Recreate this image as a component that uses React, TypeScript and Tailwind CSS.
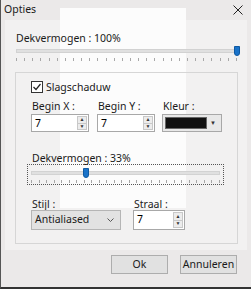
import React from 'react';

const font = { fontFamily: '"Noto Sans", "Open Sans", Arial, sans-serif' };

function Ticks({ count, className }: { count: number; className?: string }) {
  return (
    <div className={`flex justify-between ${className ?? ''}`}>
      {Array.from({ length: count }).map((_, i) => (
        <div key={i} className="w-px h-[3px] bg-[#a8a8a8]" />
      ))}
    </div>
  );
}

function Slider({ pos, ticks }: { pos: number; ticks: number }) {
  return (
    <div className="relative h-[16px]">
      <div className="absolute left-0 right-0 top-[3px] h-[4px] bg-[#e0e0e0] border border-[#d2d2d2]" />
      <div
        className="absolute top-0 w-[6px] h-[10px] bg-[#1a73c9] rounded-b-[3px] border border-[#0f5aa3]"
        style={{ left: pos }}
      />
      <Ticks count={ticks} className="absolute left-0 right-0 top-[12px]" />
    </div>
  );
}

function Spin({ value, width }: { value: string; width: string }) {
  return (
    <div className={`${width} flex border border-[#a8a8a8] bg-white`}>
      <span className="flex-1 pl-[3px] text-[10.5px] leading-[16px] text-black">{value}</span>
      <div className="w-[10px] my-[1px] mr-[1px] flex flex-col border border-[#c8c8c8] bg-[#ececec]">
        <div className="flex-1 flex items-center justify-center text-[5px] leading-none text-[#333]">▲</div>
        <div className="flex-1 flex items-center justify-center text-[5px] leading-none text-[#333] border-t border-[#c8c8c8]">▼</div>
      </div>
    </div>
  );
}

export default function App() {
  return (
    <div style={font} className="relative w-[251px] h-[289px] overflow-hidden bg-[#ebe9e9] text-[#1a1a1a] border-l border-[#555] border-b-2 border-b-[#333]">
      {/* Screenshot overlay artefacts, behind the controls */}
      <div className="absolute left-[4px] top-[20px] w-[242px] h-[230px] bg-[#f2f1f1]" />
      <div className="absolute left-[59px] top-[8px] w-[126px] h-[200px] bg-[#fcfcfc]" />

      <div className="relative">
        {/* Title bar */}
        <div className="h-[20px] flex items-center justify-between pl-[3px] pr-[8px]">
          <span className="text-[10.5px]">Opties</span>
          <svg width="10" height="10" viewBox="0 0 10 10" stroke="#222" strokeWidth="1">
            <path d="M0.5 0.5 L9.5 9.5 M9.5 0.5 L0.5 9.5" />
          </svg>
        </div>

        <div className="pl-[14px] pr-[13px]">
          <div className="mt-[10px] text-[10.5px] leading-[16px] pl-px">Dekvermogen : 100%</div>
          <div className="pl-px pr-[1px]">
            <Slider pos={218} ticks={28} />
          </div>

          {/* Group box */}
          <div className="mt-[10px] h-[172px] border border-[#d6d6d6] pl-[15px] pt-[6px]">
            <div className="flex items-center gap-[3px]">
              <div className="w-[12px] h-[12px] border border-[#333] bg-white flex items-center justify-center">
                <svg width="10" height="10" viewBox="0 0 10 10" fill="none" stroke="#222" strokeWidth="1.2">
                  <path d="M1.5 5 L4 7.5 L8.5 2" />
                </svg>
              </div>
              <span className="text-[10.5px] leading-[16px]">Slagschaduw</span>
            </div>

            <div className="mt-[3px] flex gap-[8px]">
              <div className="flex flex-col">
                <span className="text-[10.5px] leading-[16px] pl-px">Begin X :</span>
                <Spin value="7" width="w-[58px] h-[18px]" />
              </div>
              <div className="flex flex-col">
                <span className="text-[10.5px] leading-[16px] pl-px">Begin Y :</span>
                <Spin value="7" width="w-[58px] h-[18px]" />
              </div>
              <div className="flex flex-col ml-[-1px]">
                <span className="text-[10.5px] leading-[16px] pl-px">Kleur :</span>
                <div className="w-[60px] h-[18px] flex items-center border border-[#a8a8a8] bg-[#e8e8e8] px-[2px]">
                  <div className="w-[42px] h-[12px] bg-[#111] border border-[#666]" />
                  <span className="flex-1 text-center text-[6px] text-[#333]">▼</span>
                </div>
              </div>
            </div>

            <div className="mt-[20px] text-[10.5px] leading-[12px] pl-px">Dekvermogen : 33%</div>
            <div className="ml-[-4px] w-[197px] h-[21px] border border-dotted border-[#555] px-[3px] pt-[3px]">
              <Slider pos={52} ticks={26} />
            </div>

            <div className="mt-[13px] flex gap-[12px]">
              <div className="flex flex-col">
                <span className="text-[10.5px] leading-[12px] pl-px">Stijl :</span>
                <div className="w-[90px] h-[20px] flex items-center justify-between border border-[#b5b5b5] bg-[#e2e2e2] pl-[3px] pr-[6px]">
                  <span className="text-[10.5px]">Antialiased</span>
                  <svg width="7" height="4" viewBox="0 0 7 4" fill="none" stroke="#555" strokeWidth="1">
                    <path d="M0.5 0.5 L3.5 3.5 L6.5 0.5" />
                  </svg>
                </div>
              </div>
              <div className="flex flex-col">
                <span className="text-[10.5px] leading-[12px] pl-px">Straal :</span>
                <Spin value="7" width="w-[52px] h-[20px]" />
              </div>
            </div>
          </div>

          {/* Buttons */}
          <div className="mt-[11px] flex justify-end gap-[12px] pr-[1px]">
            <button className="w-[57px] h-[19px] border border-[#adadad] bg-[#e1e1e1] text-[10.5px] leading-none">Ok</button>
            <button className="w-[57px] h-[19px] border border-[#adadad] bg-[#e1e1e1] text-[10.5px] leading-none">Annuleren</button>
          </div>
        </div>
      </div>
    </div>
  );
}
